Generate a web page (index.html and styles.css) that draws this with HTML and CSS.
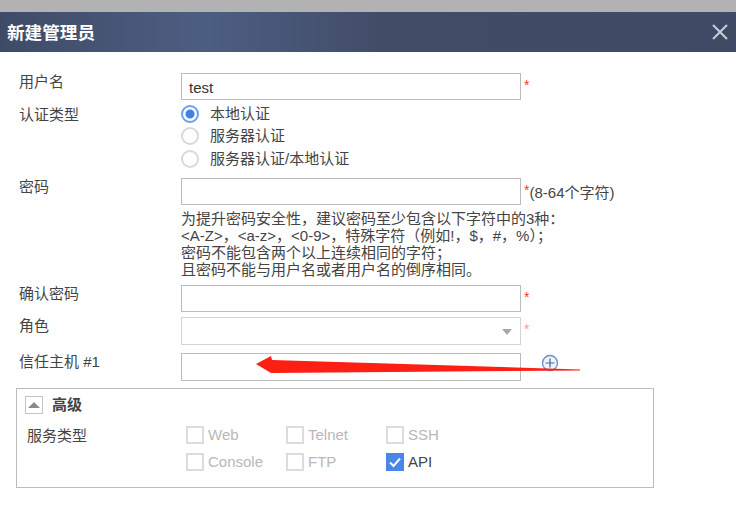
FILE: index.html
```html
<!DOCTYPE html>
<html lang="zh">
<head>
<meta charset="utf-8">
<title>新建管理员</title>
<link rel="stylesheet" href="styles.css">
</head>
<body>
<div class="topbar"></div>
<header class="head">
  <h1 class="title">新建管理员</h1>
  <svg class="close" width="18" height="18" viewBox="0 0 18 18"><path d="M2 2L16 16M16 2L2 16" stroke="#c9ced6" stroke-width="2" fill="none"/></svg>
</header>
<main class="form">
  <div class="row row-user">
    <label class="lab">用户名</label>
    <div class="field"><div class="input">test</div><span class="req">*</span></div>
  </div>
  <div class="row row-auth">
    <label class="lab">认证类型</label>
    <div class="radios">
      <div class="radio-row"><span class="radio on"></span>本地认证</div>
      <div class="radio-row"><span class="radio"></span>服务器认证</div>
      <div class="radio-row"><span class="radio"></span>服务器认证/本地认证</div>
    </div>
  </div>
  <div class="row row-pass">
    <label class="lab">密码</label>
    <div class="field"><div class="input"></div><span class="req">*</span><span class="hint">(8-64个字符)</span></div>
  </div>
  <div class="help">
    <div>为提升密码安全性，建议密码至少包含以下字符中的3种：</div>
    <div>&lt;A-Z&gt;，&lt;a-z&gt;，&lt;0-9&gt;，特殊字符（例如!，$，#，%）；</div>
    <div>密码不能包含两个以上连续相同的字符；</div>
    <div>且密码不能与用户名或者用户名的倒序相同。</div>
  </div>
  <div class="row row-confirm">
    <label class="lab">确认密码</label>
    <div class="field"><div class="input"></div><span class="req">*</span></div>
  </div>
  <div class="row row-role">
    <label class="lab">角色</label>
    <div class="field"><div class="input select"><span class="caret"></span></div><span class="req faint">*</span></div>
  </div>
  <div class="row row-trust">
    <label class="lab">信任主机 #1</label>
    <div class="field"><div class="input"></div>
      <svg class="plus" width="18" height="18" viewBox="0 0 18 18"><circle cx="9" cy="9" r="7.5" fill="#eef3fb" stroke="#6f8fcb" stroke-width="1.4"/><path d="M4.5 9H13.500M9 4.500V13.500" stroke="#4a6496" stroke-width="1.200"/></svg>
    </div>
  </div>
  <section class="adv">
    <div class="adv-head"><span class="toggle"><span class="tri"></span></span><span class="adv-title">高级</span></div>
    <div class="adv-body">
      <span class="lab lab-adv">服务类型</span>
      <div class="checks">
        <div class="check off"><span class="box"></span>Web</div>
        <div class="check off"><span class="box"></span>Telnet</div>
        <div class="check off"><span class="box"></span>SSH</div>
        <div class="check off"><span class="box"></span>Console</div>
        <div class="check off"><span class="box"></span>FTP</div>
        <div class="check"><span class="box on"><svg width="18" height="18" viewBox="0 0 18 18"><path d="M4 9.500L7.500 13L14 5.500" stroke="#fff" stroke-width="2" fill="none"/></svg></span>API</div>
      </div>
    </div>
  </section>
</main>
<svg class="arrow" width="736" height="531" viewBox="0 0 736 531"><path d="M256 364L271 356L272 360L580 369.500L580 370.500L272 373L271 373Z" fill="#fb1f14"/></svg>
</body>
</html>
```
FILE: styles.css
```css
* { box-sizing: border-box; }
html, body { margin: 0; padding: 0; }
body {
  width: 736px;
  height: 531px;
  overflow: hidden;
  position: relative;
  background: #fff;
  color: #444;
  font: 15px/18px "Liberation Sans", "Noto Sans CJK SC", sans-serif;
}
.topbar { height: 12px; background: #b2b2b2; }
.head {
  height: 40px;
  display: flex;
  align-items: center;
  justify-content: space-between;
  padding: 0 7px 0 7px;
  background: linear-gradient(90deg, #3f4b66 0, #4d5e83 28%, #414c67 52%, #3f4b65 100%);
}
.title { margin: 0; padding-top: 2px; font-size: 17.600px; line-height: 24px; font-weight: 700; color: #fff; }
.close { display: block; margin-top: 0; }
.form { padding: 21px 0 0 16px; }
.row { display: flex; align-items: flex-start; }
.lab { width: 165px; padding-left: 3px; flex: none; color: #444; }
.field { display: flex; align-items: flex-start; }
.input {
  width: 340px;
  height: 27px;
  border: 1px solid #bcbcbc;
  padding: 0 7px;
  line-height: 27px;
  color: #333;
  background: #fff;
}
.req { color: #f33; margin-left: 3px; font-size: 14px; line-height: 24px; }
.req.faint { color: #f99; }
.hint { color: #444; line-height: 29px; }
.select { position: relative; border-color: #d4d4d4; height: 28px; }
.caret {
  position: absolute;
  right: 8px;
  top: 11px;
  border-style: solid;
  border-width: 6px 5px 0;
  border-color: #a8a8a8 transparent transparent;
}
.row-auth { margin-top: 2.500px; }
.row-auth .lab { padding-top: 3px; }
.radios { display: flex; flex-direction: column; }
.radio-row { display: flex; align-items: center; height: 22.500px; }
.radio {
  width: 18px;
  height: 18px;
  border-radius: 50%;
  border: 2px solid #d8d8de;
  margin-right: 11px;
  background: #fff;
}
.radio.on { border-color: #6d9eee; background: radial-gradient(circle, #3f7fe6 0, #3f7fe6 4px, #fff 5px); }
.row-pass { margin-top: 8px; }
.help { margin: 2px 0 0 165px; height: 76px; line-height: 17px; padding-top: 1px; }
.row-role { margin-top: 5px; }
.row-trust { margin-top: 8px; }
.row-trust .input { height: 28px; }
.plus { margin: 1px 0 0 20px; display: block; }
.adv {
  margin-top: 7px;
  width: 638px;
  height: 100px;
  border: 1px solid #bcbcbc;
  padding: 7px 8px 0;
}
.adv-head { display: flex; align-items: center; height: 18px; }
.toggle {
  width: 18px;
  height: 18px;
  border: 1px solid #c4c4c4;
  display: flex;
  align-items: center;
  justify-content: center;
  margin: 0 9px 0 0;
}
.tri { border-style: solid; border-width: 0 6px 6px; border-color: transparent transparent #8a8a8a; }
.adv-title { font-weight: 700; color: #444; }
.adv-body { display: flex; margin-top: 12px; }
.lab-adv { width: 161px; padding-left: 2px; padding-top: 1px; }
.checks { display: grid; grid-template-columns: repeat(3, 100px); grid-auto-rows: 27px; }
.check { display: flex; align-items: center; height: 18px; color: #444; }
.check.off { color: #b8b8b8; }
.box {
  width: 18px;
  height: 18px;
  border: 2px solid #dcdce0;
  margin-right: 4px;
  flex: none;
  display: block;
}
.box.on { border: 0; background: #4a86e8; }
.box svg { display: block; }
.arrow { position: absolute; left: 0; top: 0; pointer-events: none; }
```
